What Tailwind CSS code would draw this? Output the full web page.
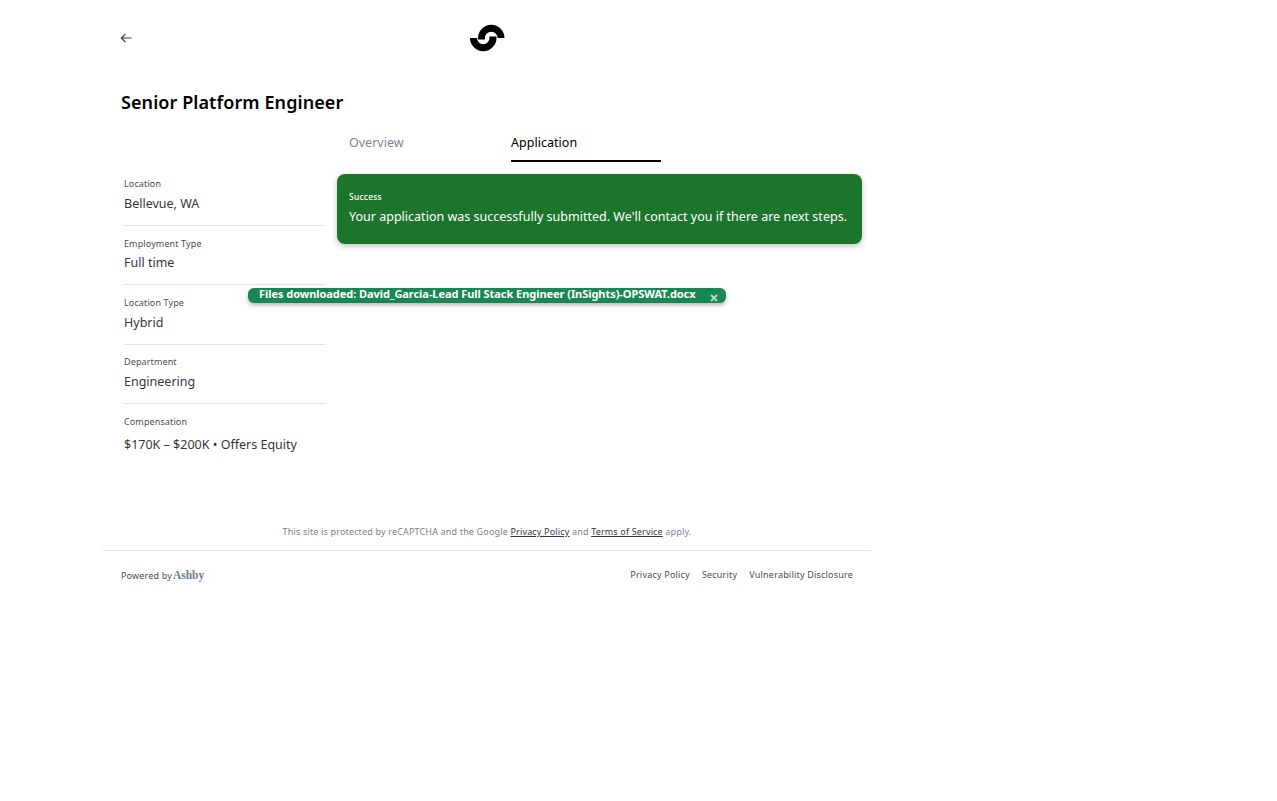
<!DOCTYPE html>
<html lang="en">
<head>
    <meta charset="UTF-8">
    <title>Senior Platform Engineer</title>
    <script src="https://cdn.jsdelivr.net/npm/@tailwindcss/browser@4"></script>
</head>
<body class="bg-white font-['Noto_Sans',sans-serif] min-h-[801px]">
    <div class="relative ml-[103px] w-[768px]">
        <!-- Header -->
        <header class="h-[85px] pt-[30px] pl-[15px] relative">
            <svg class="w-4 h-4 text-[#3a3a44]" viewBox="0 0 16 16" fill="none" stroke="currentColor" stroke-width="1.2"><path d="M13.5 8H3.5M7.5 3.8 3.3 8l4.2 4.2"/></svg>
            <svg class="absolute left-[367px] top-[24px] w-[35px] h-[28px]" viewBox="0 0 35 28" fill="none" stroke="#000" stroke-width="7"><path d="M11.5 15.5v-1.5a9.75 9.75 0 0 1 19.5 0"/><path d="M3.5 14a9.75 9.75 0 0 0 19.5 0v-1.5"/></svg>
        </header>

        <h1 class="pl-[18px] h-[34px] text-[18px] leading-[34px] font-semibold text-black tracking-[0.08px]">Senior Platform Engineer</h1>

        <div class="flex mt-[22px]">
            <!-- Sidebar -->
            <aside class="w-[234px] pl-[21px] pt-[24px] pr-[12px] shrink-0">
                <dl class="text-[#36363f]">
                    <div class="h-[61px] border-b border-[#e3e3e3] pt-[12px]">
                        <dt class="text-[9px] leading-[14px] text-[#4b4b57] tracking-[0.12px]">Location</dt>
                        <dd class="text-[12.5px] leading-[20px] mt-[3px]">Bellevue, WA</dd>
                    </div>
                    <div class="h-[59px] border-b border-[#e3e3e3] pt-[11px]">
                        <dt class="text-[9px] leading-[14px] text-[#4b4b57] tracking-[0.12px]">Employment Type</dt>
                        <dd class="text-[12.5px] leading-[20px] mt-[2px]">Full time</dd>
                    </div>
                    <div class="h-[60px] border-b border-[#e3e3e3] pt-[11px]">
                        <dt class="text-[9px] leading-[14px] text-[#4b4b57] tracking-[0.12px]">Location Type</dt>
                        <dd class="text-[12.5px] leading-[20px] mt-[3px]">Hybrid</dd>
                    </div>
                    <div class="h-[59px] border-b border-[#e3e3e3] pt-[10px]">
                        <dt class="text-[9px] leading-[14px] text-[#4b4b57] tracking-[0.12px]">Department</dt>
                        <dd class="text-[12.5px] leading-[20px] mt-[3px]">Engineering</dd>
                    </div>
                    <div class="pt-[11px]">
                        <dt class="text-[9px] leading-[14px] text-[#4b4b57] tracking-[0.12px]">Compensation</dt>
                        <dd class="text-[12.5px] leading-[20px] mt-[6px]">$170K – $200K • Offers Equity</dd>
                    </div>
                </dl>
            </aside>

            <!-- Main -->
            <main class="flex-1 -mt-[17px]">
                <nav class="flex h-[38px] pl-[12px] text-[12.5px]">
                    <a href="#" class="w-[162px] leading-[37px] text-[#7f7f96]">Overview</a>
                    <a href="#" class="w-[150px] leading-[37px] text-black border-b-2 border-black tracking-[0.03px]">Application</a>
                </nav>
                <div class="mt-[12px] w-[525px] h-[70px] rounded-[8px] bg-[#1b762c] shadow-[0_2px_6px_rgba(0,0,0,0.25)] text-white pl-[12px] pt-[16px]">
                    <p class="text-[8.5px] leading-[14px] font-medium tracking-[0.2px]">Success</p>
                    <p class="text-[12.5px] leading-[20px] mt-[3px] tracking-[0.01px]">Your application was successfully submitted. We'll contact you if there are next steps.</p>
                </div>
            </main>
        </div>

        <!-- Footer -->
        <p class="mt-[70px] text-center text-[9px] leading-[14px] text-[#7a7f99] tracking-[0.16px]">This site is protected by reCAPTCHA and the Google <a href="#" class="underline text-[#36363f]">Privacy Policy</a> and <a href="#" class="underline text-[#36363f]">Terms of Service</a> apply.</p>
        <footer class="mt-[11px] border-t border-[#e3e3e3] h-[48px] flex items-center justify-between pl-[18px] pr-[18px] text-[9px] text-[#4b4b57] tracking-[0.2px]">
            <span class="flex items-center gap-[1px] mt-[2px] tracking-[0.16px]">Powered by <span class="font-['Liberation_Serif',serif] font-bold text-[11.5px] text-[#6f7a8c] tracking-[0px]">Ashby</span></span>
            <span class="flex gap-[12px]"><a href="#">Privacy Policy</a><a href="#">Security</a><a href="#">Vulnerability Disclosure</a></span>
        </footer>

        <!-- Download toast -->
        <div class="absolute left-[145px] top-[288px] w-[478px] h-[15px] rounded-[6px] bg-[#198754] shadow-[0_2px_4px_rgba(0,0,0,0.3)] text-white pl-[11px] text-[11px] leading-[12px] font-bold tracking-[-0.05px]">
            <span>Files downloaded: David_Garcia-Lead Full Stack Engineer (InSights)-OPSWAT.docx</span>
            <svg class="absolute right-[8px] top-[6px] w-[8px] h-[8px] text-[#b5d4c5]" viewBox="0 0 8 8" stroke="currentColor" stroke-width="2"><path d="M1 1l6 6M7 1 1 7"/></svg>
        </div>
    </div>
</body>
</html>
